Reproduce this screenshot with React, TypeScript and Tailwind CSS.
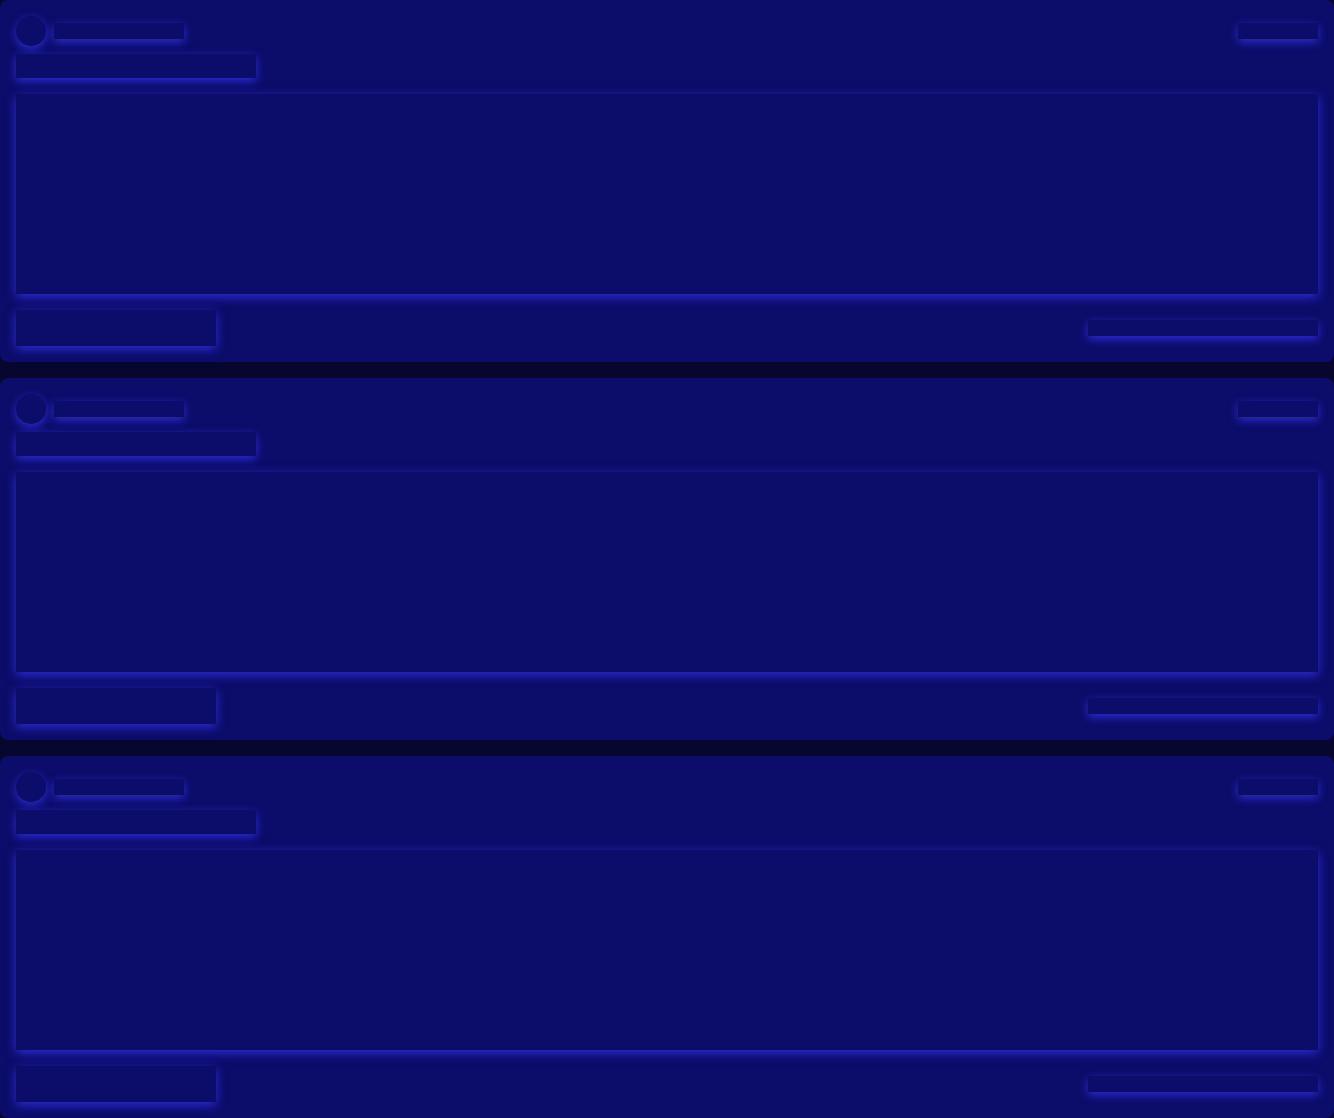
const glow = 'bg-[#0c0c6a] shadow-[0_3px_10px_rgba(52,52,232,0.85)]'

function SkeletonCard() {
  return (
    <div className="flex h-[362px] flex-col rounded-lg bg-[#0c0c6a] p-4">
      <div className="flex items-center justify-between">
        <div className="flex items-center gap-2">
          <div className={`h-[30px] w-[30px] rounded-full ${glow}`} />
          <div className={`h-4 w-[130px] ${glow}`} />
        </div>
        <div className={`h-4 w-20 ${glow}`} />
      </div>
      <div className={`mt-2 h-6 w-60 ${glow}`} />
      <div className={`mt-4 h-[200px] w-full ${glow}`} />
      <div className="mt-4 flex items-center justify-between">
        <div className={`h-9 w-[200px] ${glow}`} />
        <div className={`h-4 w-[230px] ${glow}`} />
      </div>
    </div>
  )
}

export default function App() {
  return (
    <div className="flex min-h-[1118px] flex-col gap-4 bg-[#06062e]">
      <SkeletonCard />
      <SkeletonCard />
      <SkeletonCard />
    </div>
  )
}
